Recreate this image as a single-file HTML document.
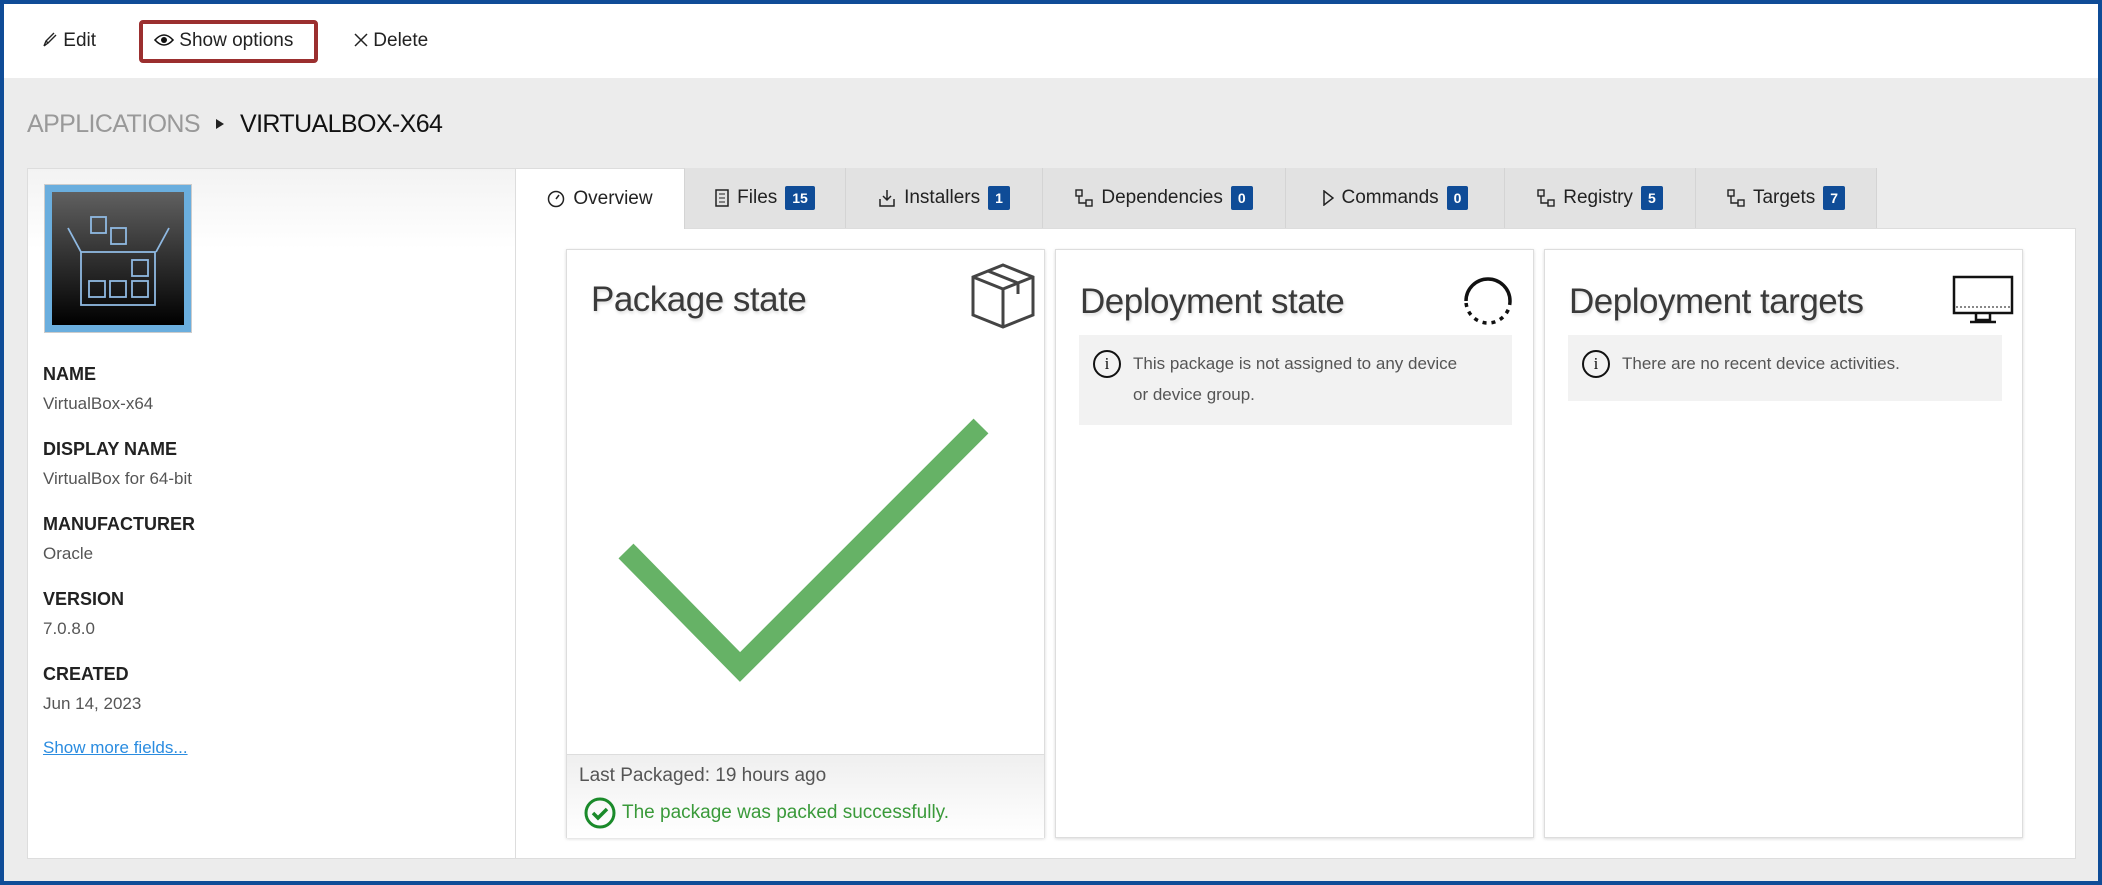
<!DOCTYPE html>
<html><head><meta charset="utf-8"><style>
*{box-sizing:border-box;margin:0;padding:0}
body{width:2102px;height:885px;overflow:hidden;font-family:"Liberation Sans",sans-serif;background:#0f4c97;position:relative}
.a{position:absolute}
#main{left:4px;top:4px;width:2094px;height:877px;background:#ececec}
#top{left:4px;top:4px;width:2094px;height:74px;background:#fff}
.tb{font-size:19px;color:#222;top:30px}
.lbl{left:43px;font-size:18px;font-weight:bold;color:#222}
.val{left:43px;font-size:17px;color:#555}
.tab{top:168px;height:60px;background:#e2e2e2;border-right:1px solid #d4d4d4;font-size:19px;color:#222;display:flex;align-items:center;justify-content:center;gap:8px}
.bd{background:#0f4c97;color:#fff;font-size:14px;font-weight:bold;padding:4px 7px;border-radius:2px}
.card{top:249px;height:589px;width:479px;background:#fff;border:1px solid #ddd;box-shadow:0 1px 3px rgba(0,0,0,.15)}
.ct{font-size:35px;color:#3a3a3a;top:30px;left:24px;text-shadow:1px 2px 3px rgba(0,0,0,.15);letter-spacing:-0.5px}
.info{background:#f2f2f2;font-size:17px;color:#555;line-height:31px}
.ic{display:inline-block;width:28px;height:28px;border:2px solid #111;border-radius:50%;text-align:center;font-size:17px;line-height:24px;color:#111;font-family:"Liberation Serif",serif}
</style></head><body>
<div class="a" id="main"></div>
<div class="a" id="top"></div>
<div class="a tb" style="left:42px">
<svg width="16" height="16" viewBox="0 0 16 16" style="vertical-align:-2px"><path d="M2 14 L4 9 L12 1 M4 9 L6 11 L14 3 M2 14 L6 11" stroke="#222" stroke-width="1.4" fill="none"/></svg> Edit</div>
<div class="a" style="left:139px;top:20px;width:179px;height:43px;border:4px solid #9b2f2f;border-radius:4px"></div>
<div class="a tb" style="left:154px"><svg width="20" height="14" viewBox="0 0 20 14" style="vertical-align:-1px"><path d="M1 7 Q10 -3 19 7 Q10 17 1 7Z" stroke="#111" stroke-width="1.6" fill="none"/><circle cx="10" cy="7" r="3" fill="#111"/></svg> Show options</div>
<div class="a tb" style="left:354px"><svg width="14" height="14" viewBox="0 0 14 14" style="vertical-align:-1px"><path d="M1 1L13 13M13 1L1 13" stroke="#222" stroke-width="1.5"/></svg> Delete</div>
<div class="a" style="left:27px;top:110px;font-size:25px;color:#999;letter-spacing:-0.6px">APPLICATIONS</div>
<div class="a" style="left:216px;top:119px;width:0;height:0;border-left:8px solid #222;border-top:5px solid transparent;border-bottom:5px solid transparent"></div>
<div class="a" style="left:240px;top:110px;font-size:25px;color:#111;letter-spacing:-0.6px">VIRTUALBOX-X64</div>
<div class="a" style="left:27px;top:168px;width:489px;height:691px;background:linear-gradient(#f3f3f3,#fff 80px);border:1px solid #ddd"></div>
<div class="a" style="left:44px;top:184px;width:148px;height:149px;background:#6aaede;border:1px solid #ccc;padding:7px">
<svg width="132" height="133" viewBox="0 0 132 133"><defs><linearGradient id="g" x1="0" y1="0" x2="0" y2="1"><stop offset="0" stop-color="#606060"/><stop offset="1" stop-color="#000"/></linearGradient></defs><rect width="132" height="133" fill="url(#g)"/><g stroke="#8fb9e2" stroke-width="1.8" fill="none"><rect x="39" y="25" width="15" height="16"/><rect x="59" y="36" width="15" height="16"/><path d="M16 36 L29 60 M117 36 L104 60"/><rect x="29" y="60" width="74" height="53"/><rect x="80" y="68" width="16" height="16"/><rect x="37" y="89" width="16" height="16"/><rect x="58" y="89" width="16" height="16"/><rect x="80" y="89" width="16" height="16"/></g></svg></div>
<div class="a lbl" style="top:364px">NAME</div><div class="a val" style="top:394px">VirtualBox-x64</div>
<div class="a lbl" style="top:439px">DISPLAY NAME</div><div class="a val" style="top:469px">VirtualBox for 64-bit</div>
<div class="a lbl" style="top:514px">MANUFACTURER</div><div class="a val" style="top:544px">Oracle</div>
<div class="a lbl" style="top:589px">VERSION</div><div class="a val" style="top:619px">7.0.8.0</div>
<div class="a lbl" style="top:664px">CREATED</div><div class="a val" style="top:694px">Jun 14, 2023</div>
<div class="a val" style="top:738px;color:#2a8ce0;text-decoration:underline">Show more fields...</div>
<div class="a" style="left:515px;top:228px;width:1561px;height:631px;background:#fff;border:1px solid #ddd"></div>
<div class="a tab" style="left:516px;width:169px;background:#fff;height:61px;border-top:1px solid #ddd"><svg width="18" height="18"><circle cx="9" cy="9" r="7.5" fill="none" stroke="#222" stroke-width="1.5"/><path d="M9 9L12 5" stroke="#222" stroke-width="1.5"/></svg>Overview</div>
<div class="a tab" style="left:685px;width:161px"><svg width="14" height="18"><rect x="1" y="1" width="12" height="16" fill="none" stroke="#222" stroke-width="1.5"/><path d="M4 5h6M4 9h6M4 13h6" stroke="#222"/></svg>Files <span class="bd">15</span></div>
<div class="a tab" style="left:846px;width:197px"><svg width="18" height="18"><path d="M2 10v7h14v-7M9 1v9M5 7l4 4 4-4" fill="none" stroke="#222" stroke-width="1.5"/></svg>Installers <span class="bd">1</span></div>
<div class="a tab" style="left:1043px;width:243px"><svg width="18" height="18"><rect x="1" y="1" width="6" height="6" fill="none" stroke="#222" stroke-width="1.4"/><rect x="11" y="11" width="6" height="6" fill="none" stroke="#222" stroke-width="1.4"/><path d="M4 7v7h7" fill="none" stroke="#222" stroke-width="1.4"/></svg>Dependencies <span class="bd">0</span></div>
<div class="a tab" style="left:1286px;width:219px"><svg width="12" height="16"><path d="M2 1L11 8L2 15Z" fill="none" stroke="#222" stroke-width="1.5"/></svg>Commands <span class="bd">0</span></div>
<div class="a tab" style="left:1505px;width:191px"><svg width="18" height="18"><rect x="1" y="1" width="6" height="6" fill="none" stroke="#222" stroke-width="1.4"/><rect x="11" y="11" width="6" height="6" fill="none" stroke="#222" stroke-width="1.4"/><path d="M4 7v7h7" fill="none" stroke="#222" stroke-width="1.4"/></svg>Registry <span class="bd">5</span></div>
<div class="a tab" style="left:1696px;width:181px"><svg width="18" height="18"><rect x="1" y="1" width="6" height="6" fill="none" stroke="#222" stroke-width="1.4"/><rect x="11" y="11" width="6" height="6" fill="none" stroke="#222" stroke-width="1.4"/><path d="M4 7v7h7" fill="none" stroke="#222" stroke-width="1.4"/></svg>Targets <span class="bd">7</span></div>

<div class="a card" style="left:566px">
<div class="a ct">Package state</div>
<svg class="a" style="left:402px;top:12px" width="68" height="68" viewBox="0 0 68 68"><g fill="none" stroke="#444" stroke-width="3"><path d="M34 3 L64 15 L64 53 L34 65 L4 53 L4 15 Z M4 15 L34 27 L64 15 M34 27 V65 M19 9 L49 21 V32"/></g></svg>
<svg class="a" style="left:0;top:0" width="479" height="500"><path d="M59 301 L173 417 L414 176" stroke="#66b266" stroke-width="21" fill="none"/></svg>
<div class="a" style="left:0;top:504px;width:477px;height:84px;background:linear-gradient(#efefef,#fff);border-top:1px solid #ddd">
<div class="a" style="left:12px;top:10px;font-size:19px;color:#555">Last Packaged: 19 hours ago</div>
<div class="a" style="left:17px;top:42px;font-size:19px;color:#3a9a3a;display:flex;align-items:center;gap:6px"><svg width="32" height="32"><circle cx="16" cy="16" r="14" fill="none" stroke="#1a8a2a" stroke-width="3"/><path d="M9 16l5 5 9-9" stroke="#1a8a2a" stroke-width="3.5" fill="none"/></svg>The package was packed successfully.</div></div>
</div>
<div class="a card" style="left:1055px">
<div class="a ct" style="top:32px">Deployment state</div>
<svg class="a" style="left:406px;top:21px" width="52" height="54" viewBox="0 0 52 54"><path d="M4 30 A22 22 0 1 1 48 30" fill="none" stroke="#111" stroke-width="3.5"/><path d="M48 30 A22 22 0 0 1 4 30" fill="none" stroke="#111" stroke-width="3.5" stroke-dasharray="4 5"/></svg>
<div class="a info" style="left:23px;top:85px;width:433px;height:90px;padding:13px 0 0 54px">This package is not assigned to any device<br>or device group.<span class="ic a" style="left:14px;top:15px">i</span></div>
</div>
<div class="a card" style="left:1544px">
<div class="a ct" style="top:32px">Deployment targets</div>
<svg class="a" style="left:407px;top:25px" width="62" height="50" viewBox="0 0 62 50"><rect x="2" y="2" width="58" height="36" fill="none" stroke="#111" stroke-width="2.5"/><path d="M4 32h54" stroke="#111" stroke-dasharray="2 2"/><path d="M24 38v7h14v-7M18 47h26" stroke="#111" stroke-width="2.5" fill="none"/></svg>
<div class="a info" style="left:23px;top:85px;width:434px;height:66px;padding:13px 0 0 54px">There are no recent device activities.<span class="ic a" style="left:14px;top:15px">i</span></div>
</div>
</body></html>
